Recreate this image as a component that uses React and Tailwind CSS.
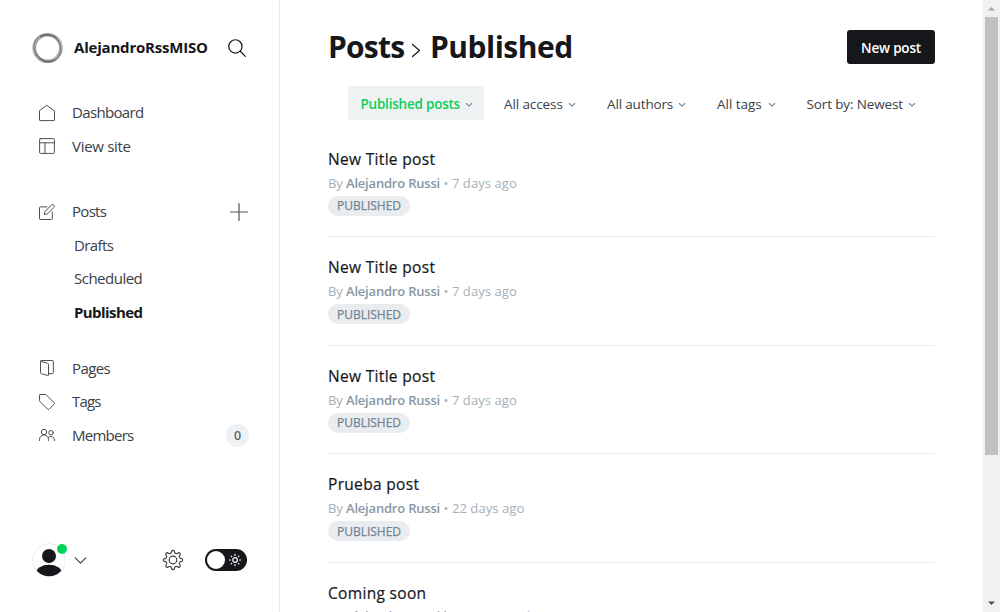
import React from "react";

function Icon({ className = "", children, box = "0 0 16 16" }) {
  return (
    <svg viewBox={box} className={"shrink-0 overflow-visible " + className} fill="none" stroke="currentColor" strokeLinecap="round" strokeLinejoin="round">
      {children}
    </svg>
  );
}

const icons = {
  home: <path d="M.5 6v9a.6.6 0 0 0 .6.6h13.8a.6.6 0 0 0 .6-.6V6L8 .5z" />,
  site: (
    <>
      <rect x=".6" y=".6" width="14.8" height="14.8" rx=".7" />
      <path d="M.6 4.8h14.8M6 4.8v10.6" />
    </>
  ),
  edit: (
    <>
      <path d="M13.3 8v6.8a.7.7 0 0 1-.7.7H1.2a.7.7 0 0 1-.7-.7V3.6a.7.7 0 0 1 .7-.7h6.5" />
      <path d="m8.3 9.9-3 .6.6-3L12.7.9a1.3 1.3 0 0 1 1.9 0l.4.4a1.3 1.3 0 0 1 0 1.9z" />
    </>
  ),
  pages: (
    <>
      <path d="M9.500 14.700V4.300a1 1 0 0 0-.8-1L1.500 1.200v11.500a1 1 0 0 0 .8 1l6.400 1.800a.6.6 0 0 0 .8-.8z" />
      <path d="M1.500 1.200C1.500.8 1.800.5 2.300.5h11.100c.6 0 1 .4 1 1v11.100c0 .6-.4 1-1 1H9.500" />
    </>
  ),
  tag: <path d="M1.2.5h5.2a1.5 1.5 0 0 1 1 .4l7.8 7.9a.9.9 0 0 1 0 1.3L10 15.3a.9.9 0 0 1-1.3 0L.9 7.4a1.5 1.5 0 0 1-.4-1V1.2a.7.7 0 0 1 .7-.7z" />,
  members: (
    <>
      <circle cx="5" cy="5" r="2.7" />
      <circle cx="12" cy="5.7" r="2.2" />
      <path d="M.5 13.5v-1a4.5 4.5 0 0 1 9 0v1M9.4 10.2a3.8 3.8 0 0 1 6.1 2.8v.5" />
    </>
  ),
};

function NavItem({ icon, label, track = "tracking-[-0.6px]", children }) {
  return (
    <li className="flex h-[33.5px] items-center pl-[39px] pr-[31px] text-[#394047]">
      <Icon className="mr-[17px] mt-px size-4 text-[#4a5158]">{icons[icon]}</Icon>
      <span className={"grow text-[15px] " + track}>{label}</span>
      {children}
    </li>
  );
}

function SubItem({ label, className }) {
  return <li className={"flex h-[33.5px] items-center pl-[74px] text-[15px] " + className}>{label}</li>;
}

function Sidebar() {
  return (
    <aside className="flex w-[280px] shrink-0 flex-col border-r border-[#e6e9eb]">
      <div className="mt-8 flex h-8 items-center pl-8">
        <svg viewBox="0 0 32 32" className="size-8 shrink-0" fill="none">
          <circle cx="15.6" cy="16" r="13.3" stroke="#999" strokeWidth="3.6" />
          <ellipse cx="16" cy="15.4" rx="14.3" ry="13" stroke="#c4c4c4" strokeWidth="1.2" transform="rotate(-38 16 16)" />
          <ellipse cx="15.4" cy="16.2" rx="14" ry="13" stroke="#777" strokeWidth=".9" transform="rotate(35 16 16)" />
          <path d="M4 22a13.5 13.5 0 0 0 19 6M8 5a14 14 0 0 1 17 1" stroke="#5a5a5a" />
        </svg>
        <span className="-mt-[2px] ml-[10px] w-[154px] text-[15px] font-bold tracking-[-0.2px] text-[#15171a]">AlejandroRssMISO</span>
        <Icon className="-mt-px size-[18px] text-[#15171a]" box="0 0 19 19">
          <circle cx="7.8" cy="7.8" r="7" strokeWidth="1.3" />
          <path d="m12.9 12.9 5.4 5.4" strokeWidth="1.3" />
        </Icon>
      </div>
      <nav className="mt-[31.5px]">
        <ul>
          <NavItem icon="home" label="Dashboard" track="tracking-[-0.65px]" />
          <NavItem icon="site" label="View site" track="tracking-[-0.3px]" />
        </ul>
        <ul className="mt-8">
          <NavItem icon="edit" label="Posts" track="tracking-[-0.7px]">
            <Icon className="mt-px size-[18px] text-[#4a5158]" box="0 0 18 18">
              <path d="M9 .5v17M.5 9h17" strokeWidth="1.2" />
            </Icon>
          </NavItem>
          <SubItem label="Drafts" className="tracking-[-0.6px] text-[#394047]" />
          <SubItem label="Scheduled" className="tracking-[-0.5px] text-[#394047]" />
          <SubItem label="Published" className="font-bold tracking-[-0.58px] text-[#15171a]" />
        </ul>
        <ul className="mt-[22.5px]">
          <NavItem icon="pages" label="Pages" />
          <NavItem icon="tag" label="Tags" track="tracking-[-0.8px]" />
          <NavItem icon="members" label="Members" track="tracking-[-0.75px]">
            <span className="-mr-px mt-px flex size-[23px] items-center justify-center rounded-full bg-[#eff2f4] pt-[3px] text-[12.5px] font-semibold text-[#5b6870]">0</span>
          </NavItem>
        </ul>
      </nav>
      <footer className="mb-[35px] mt-auto flex h-[34px] items-center pl-8">
        <div className="relative">
          <svg viewBox="0 0 34 34" className="block size-[34px]">
            <defs><clipPath id="avatar"><circle cx="17" cy="17" r="16.3" /></clipPath></defs>
            <circle cx="17" cy="17" r="16.4" fill="#fff" stroke="#e5e9ec" strokeWidth=".8" />
            <g clipPath="url(#avatar)" fill="#15171a">
              <circle cx="17" cy="13" r="7" />
              <ellipse cx="17" cy="30" rx="13" ry="8.2" />
            </g>
          </svg>
          <span className="absolute left-[25px] top-[1px] size-[10px] rounded-full bg-[#00d454]" />
        </div>
        <Icon className="ml-[9px] mt-px h-[7px] w-[11px] text-[#394047]" box="0 0 11 7"><path d="m.2.8 5.3 5.4L10.8.8" strokeWidth="1.1" /></Icon>
        <Icon className="ml-[77px] size-5 text-[#394047]" box="0 0 20 20">
          <circle cx="10" cy="10" r="3.8" strokeWidth="1.2" />
          <path strokeWidth="1.2" d="M8.7 1.2a1.4 1.4 0 0 1 2.6 0l.4 1.4a1.7 1.7 0 0 0 2.3.9l1.2-.6a1.4 1.4 0 0 1 1.9 1.9L16.5 6a1.7 1.7 0 0 0 .9 2.3l1.4.4a1.4 1.4 0 0 1 0 2.6l-1.4.4a1.7 1.7 0 0 0-.9 2.3l.6 1.2a1.4 1.4 0 0 1-1.9 1.9L14 16.5a1.7 1.7 0 0 0-2.3.9l-.4 1.4a1.4 1.4 0 0 1-2.6 0l-.4-1.4A1.7 1.7 0 0 0 6 16.5l-1.2.6a1.4 1.4 0 0 1-1.9-1.9L3.5 14a1.7 1.7 0 0 0-.9-2.3l-1.4-.4a1.4 1.4 0 0 1 0-2.6l1.4-.4A1.7 1.7 0 0 0 3.5 6l-.6-1.2a1.4 1.4 0 0 1 1.9-1.9L6 3.5a1.7 1.7 0 0 0 2.3-.9z" />
        </Icon>
        <div className="ml-[22px] flex h-[22px] w-[42px] items-center justify-between rounded-full bg-[#15171a] pl-[2px] pr-[6px]">
          <span className="size-[18px] rounded-full bg-white" />
          <Icon className="size-3 text-white" box="0 0 12 12">
            <circle cx="6" cy="6" r="2.3" strokeWidth="1.2" />
            <path strokeWidth="1.2" d="M6 .4v1M6 10.6v1M.4 6h1M10.6 6h1M2.1 2.1l.6.6M9.3 9.3l.6.6M9.3 2.7l.6-.6M2.1 9.9l.6-.6" />
          </Icon>
        </div>
      </footer>
    </aside>
  );
}

function Filter({ label, className, active }) {
  return (
    <button className={"flex h-[34px] items-center justify-between rounded-[2px] pt-[2px] text-[13.5px] " + className + (active ? " bg-[#eff2f3] font-semibold text-[#0bcf5a]" : " text-[#394047]")}>
      {label}
      <Icon className="mt-px h-1 w-[6px] text-[#7c8b9a]" box="0 0 6 4"><path d="m.3.5 2.7 2.7L5.7.5" strokeWidth="1.15" /></Icon>
    </button>
  );
}

function Post({ title, age, tag }) {
  return (
    <li className="h-[108.5px] shrink-0 border-b border-[#e9ecee] pt-[20px]">
      <h3 className="h-5 text-[15.5px] font-medium leading-5 tracking-[0.32px] text-[#15171a] [-webkit-text-stroke:0.2px_#15171a]">{title}</h3>
      <p className={"h-5 whitespace-nowrap text-[13px] leading-5 tracking-[-0.1px] text-[#a5b0b8] " + (tag ? "mt-[3px]" : "mt-1")}>
        By <span className="font-semibold tracking-[-0.2px] text-[#8797a3]">Alejandro Russi{tag && ` in ${tag}`}</span>
        <span className="tracking-[0.08px]"> • {age}</span>
      </p>
      <span className="mt-[3px] flex h-5 w-[82px] items-center justify-center rounded-full bg-[#e9edf0] pt-px text-[12px] font-medium text-[#738494] [-webkit-text-stroke:0.25px_#738494]">PUBLISHED</span>
    </li>
  );
}

const posts = [
  ["New Title post", "7 days ago"],
  ["New Title post", "7 days ago"],
  ["New Title post", "7 days ago"],
  ["Prueba post", "22 days ago"],
  ["Coming soon", "22 days ago", "News"],
];

export default function App() {
  return (
    <div className="flex h-[612px] w-[1000px] overflow-hidden bg-white font-['Open_Sans','Noto_Sans',sans-serif]">
      <Sidebar />
      <main className="flex w-[703px] flex-col px-12">
        <header className="mt-[30px] flex h-[34px] shrink-0 items-center">
          <h1 className="flex items-center whitespace-nowrap text-[30px] font-bold leading-[34px] text-[#15171a]">
            <span className="w-[84px] tracking-[-0.8px]">Posts</span>
            <Icon className="mt-[6px] h-[13px] w-[8px]" box="0 0 8 13"><path d="m.5.5 7 6-7 6" strokeWidth="1.2" /></Icon>
            <span className="ml-[10px] tracking-[-0.5px]">Published</span>
          </h1>
          <button className="ml-auto h-[34px] w-[88px] rounded-[3px] bg-[#15171a] pt-[2px] text-[13.5px] font-semibold tracking-[-0.2px] text-white">New post</button>
        </header>
        <div className="mt-[22px] flex h-[34px] shrink-0 whitespace-nowrap pl-5">
          <Filter active label="Published posts" className="w-[136px] pl-[12.5px] pr-3 tracking-[-0.22px]" />
          <Filter label="All access" className="ml-5 w-[71px] tracking-[-0.1px]" />
          <Filter label="All authors" className="ml-8 w-[78px] tracking-[-0.15px]" />
          <Filter label="All tags" className="ml-8 w-[58px] tracking-[-0.03px]" />
          <Filter label="Sort by: Newest" className="ml-[31.5px] w-[108px] tracking-[-0.13px]" />
        </div>
        <ul className="mt-[8.5px]">
          {posts.map(([title, age, tag], i) => <Post key={i} title={title} age={age} tag={tag} />)}
        </ul>
      </main>
      <div className="flex w-[17px] shrink-0 flex-col items-center bg-[#f1f1f1]">
        <svg viewBox="0 0 17 17" className="size-[17px] shrink-0"><path d="M5 10.5h7L8.5 7z" fill="#a3a3a3" /></svg>
        <div className="h-[438px] w-[13px] bg-[#c1c1c1]" />
        <svg viewBox="0 0 17 17" className="mt-auto size-[17px] shrink-0"><path d="M5 6.5h7L8.5 10z" fill="#505050" /></svg>
      </div>
    </div>
  );
}
